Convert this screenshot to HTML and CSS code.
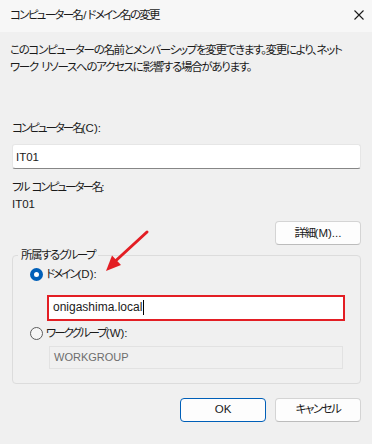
FILE: index.html
```html
<!DOCTYPE html>
<html lang="ja">
<head>
  <meta charset="UTF-8">
  <title>コンピューター名/ドメイン名の変更</title>
  <link rel="stylesheet" href="styles.css">
</head>
<body>
  <div class="dialog">
    <!-- タイトルバー -->
    <div class="titlebar">
      <span class="title">コンピューター名<span class="key">/</span>ドメイン名の変更</span>
      <svg class="close" width="10" height="10" viewBox="0 0 10 10">
        <path d="M0.5 0.5L9.5 9.5M9.5 0.5L0.5 9.5" stroke="#1a1a1a" stroke-width="1.1" fill="none"/>
      </svg>
    </div>

    <div class="content">
      <p class="desc">このコンピューターの名前とメンバーシップを変更できます。変更により、ネット<br>ワーク<span class="key"> </span>リソースへのアクセスに影響する場合があります。</p>

      <div class="label name-label">コンピューター名<span class="key">(C):</span></div>
      <input class="textbox" type="text" value="IT01">

      <div class="label full-label">フル<span class="key"> </span>コンピューター名<span class="key">:</span></div>
      <div class="label key">IT01</div>

      <div class="row-right details-row">
        <button type="button" class="btn">詳細<span class="key">(M)...</span></button>
      </div>

      <fieldset class="group">
        <legend>所属するグループ</legend>
        <label class="radio-row domain-row">
          <input type="radio" name="member" checked>
          <span>ドメイン<span class="key">(D):</span></span>
        </label>
        <div class="indent-domain">
          <div class="domain-box">onigashima.local<span class="caret"></span></div>
        </div>
        <label class="radio-row work-row">
          <input type="radio" name="member">
          <span>ワークグループ<span class="key">(W):</span></span>
        </label>
        <div class="indent-work">
          <div class="work-box">WORKGROUP</div>
        </div>
      </fieldset>

      <div class="row-right footer">
        <button type="button" class="btn btn-default">OK</button>
        <button type="button" class="btn">キャンセル</button>
      </div>
    </div>

    <!-- 注釈の矢印 -->
    <svg class="arrow" width="372" height="444" viewBox="0 0 372 444">
      <line x1="147" y1="232" x2="116" y2="260.5" stroke="#e31e24" stroke-width="3" stroke-linecap="round"/>
      <polygon points="106,271 112,255.5 121,265" fill="#e31e24"/>
    </svg>
  </div>
</body>
</html>
```

FILE: styles.css
```css
/* 色 */
:root {
  --bg: #f0f0f0;
  --title-bg: #f7f7f7;
  --text: #1a1a1a;
  --muted: #6d6d6d;
  --line: #dcdcdc;
  --accent: #005fb8;
  --mark: #e31e24;
}
* {
  box-sizing: border-box;
}
body {
  margin: 0;
  background: var(--bg);
  color: var(--text);
  font-family: "Liberation Sans", "Noto Sans CJK JP", sans-serif;
  font-size: 11.5px;
  line-height: 17px;
  font-feature-settings: "palt";
  letter-spacing: -2px;
}
/* 英数字部分は詰めない */
.key {
  letter-spacing: 0;
}
.dialog {
  position: relative;
  width: 372px;
  height: 444px;
  overflow: hidden;
}
/* タイトルバー */
.titlebar {
  height: 32px;
  background: var(--title-bg);
  display: flex;
  align-items: center;
  justify-content: space-between;
  padding: 0 8px 2px 10px;
}
.title {
  letter-spacing: -1.7px;
}
.title .key {
  margin: 0 1px;
}
/* 本体 */
.content {
  padding: 0 11px 0 12px;
}
.desc {
  margin: 9.5px 0 0 -2px;
  white-space: nowrap;
  letter-spacing: -1.3px;
}
.label {
  height: 17px;
}
.name-label {
  margin-top: 44px;
}
.textbox {
  display: block;
  width: 100%;
  height: 25px;
  margin-top: 7.5px;
  padding: 0 0 0 3px;
  border: 1px solid #e6e6e6;
  border-bottom-color: #868686;
  border-radius: 3px;
  background: #fff;
  font: inherit;
  letter-spacing: 0;
  color: var(--text);
}
.full-label {
  margin-top: 9.5px;
}
.row-right {
  display: flex;
  justify-content: flex-end;
  gap: 9px;
}
.details-row {
  margin-top: 8.5px;
}
.btn {
  width: 86px;
  height: 24px;
  padding: 0;
  border: 1px solid #d4d4d4;
  border-bottom-color: #bcbcbc;
  border-radius: 4px;
  background: #fdfdfd;
  font: inherit;
  font-feature-settings: "palt";
  letter-spacing: -1.5px;
  color: var(--text);
}
.btn-default {
  border: 1px solid var(--accent);
  letter-spacing: 0;
}
/* グループ */
.group {
  margin: 2px 0 0 0;
  padding: 0 15px 14px 17px;
  border: 1px solid var(--line);
  border-radius: 4px;
}
.group legend {
  padding: 0 3px;
  margin-left: -12px;
  line-height: 17px;
  letter-spacing: -1.5px;
}
.radio-row {
  display: flex;
  align-items: center;
  gap: 3px;
  height: 17px;
}
.radio-row input {
  appearance: none;
  margin: 0;
  width: 13px;
  height: 13px;
  border-radius: 50%;
  border: 1px solid #5c5c5c;
  background: #f6f6f6;
}
.radio-row input:checked {
  border: 4px solid var(--accent);
  background: #fff;
}
.domain-row {
  margin-top: 2px;
}
.indent-domain {
  padding-left: 17px;
  margin-top: 11.5px;
}
.domain-box {
  height: 26px;
  border: 2px solid var(--mark);
  background: #fff;
  padding: 0 0 0 4px;
  display: flex;
  align-items: center;
  font-size: 12px;
  letter-spacing: 0;
}
.caret {
  display: inline-block;
  width: 1px;
  height: 15px;
  margin-left: 1px;
  background: #000;
}
.work-row {
  margin-top: 4.5px;
}
.indent-work {
  padding: 0 2px 0 19px;
  margin-top: 3.5px;
}
.work-box {
  height: 23px;
  border: 1px solid #e2e2e2;
  background: #f0f0f0;
  color: var(--muted);
  padding-left: 4px;
  line-height: 21px;
  font-size: 11px;
  letter-spacing: 0;
}
.footer {
  margin-top: 14px;
}
/* 注釈 */
.arrow {
  position: absolute;
  left: 0;
  top: 0;
  pointer-events: none;
}
```
